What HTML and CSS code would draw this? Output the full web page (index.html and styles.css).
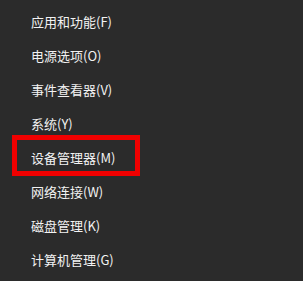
FILE: index.html
```html
<!DOCTYPE html>
<html lang="zh-CN">
<head>
  <meta charset="UTF-8" />
  <title>快速链接菜单</title>
  <link rel="stylesheet" href="styles.css">
</head>
<body>
  <ul class="menu">
    <li class="item">应用和功能(F)</li>
    <li class="item">电源选项(O)</li>
    <li class="item">事件查看器(V)</li>
    <li class="item">系统(Y)</li>
    <li class="item marked">设备管理器(M)<span class="mark"></span></li>
    <li class="item">网络连接(W)</li>
    <li class="item">磁盘管理(K)</li>
    <li class="item">计算机管理(G)</li>
  </ul>
</body>
</html>
```

FILE: styles.css
```css
* { margin: 0; padding: 0; box-sizing: border-box; }
html, body {
  height: 100%;
  background: #2b2b2b;
  color: #f2f2f2;
  font-family: "Noto Sans CJK SC", "Noto Sans", sans-serif;
  overflow: hidden;
}

.menu {
  list-style: none;
  padding-top: 5px;
}
.item {
  position: relative;
  height: 34px;
  line-height: 34px;
  padding-left: 31px;
  font-size: 13px;
}

/* 红框标注 */
.mark {
  position: absolute;
  left: 12px;
  top: -6px;
  width: 128px;
  height: 41px;
  border: 5px solid #f00000;
  pointer-events: none;
}
```
